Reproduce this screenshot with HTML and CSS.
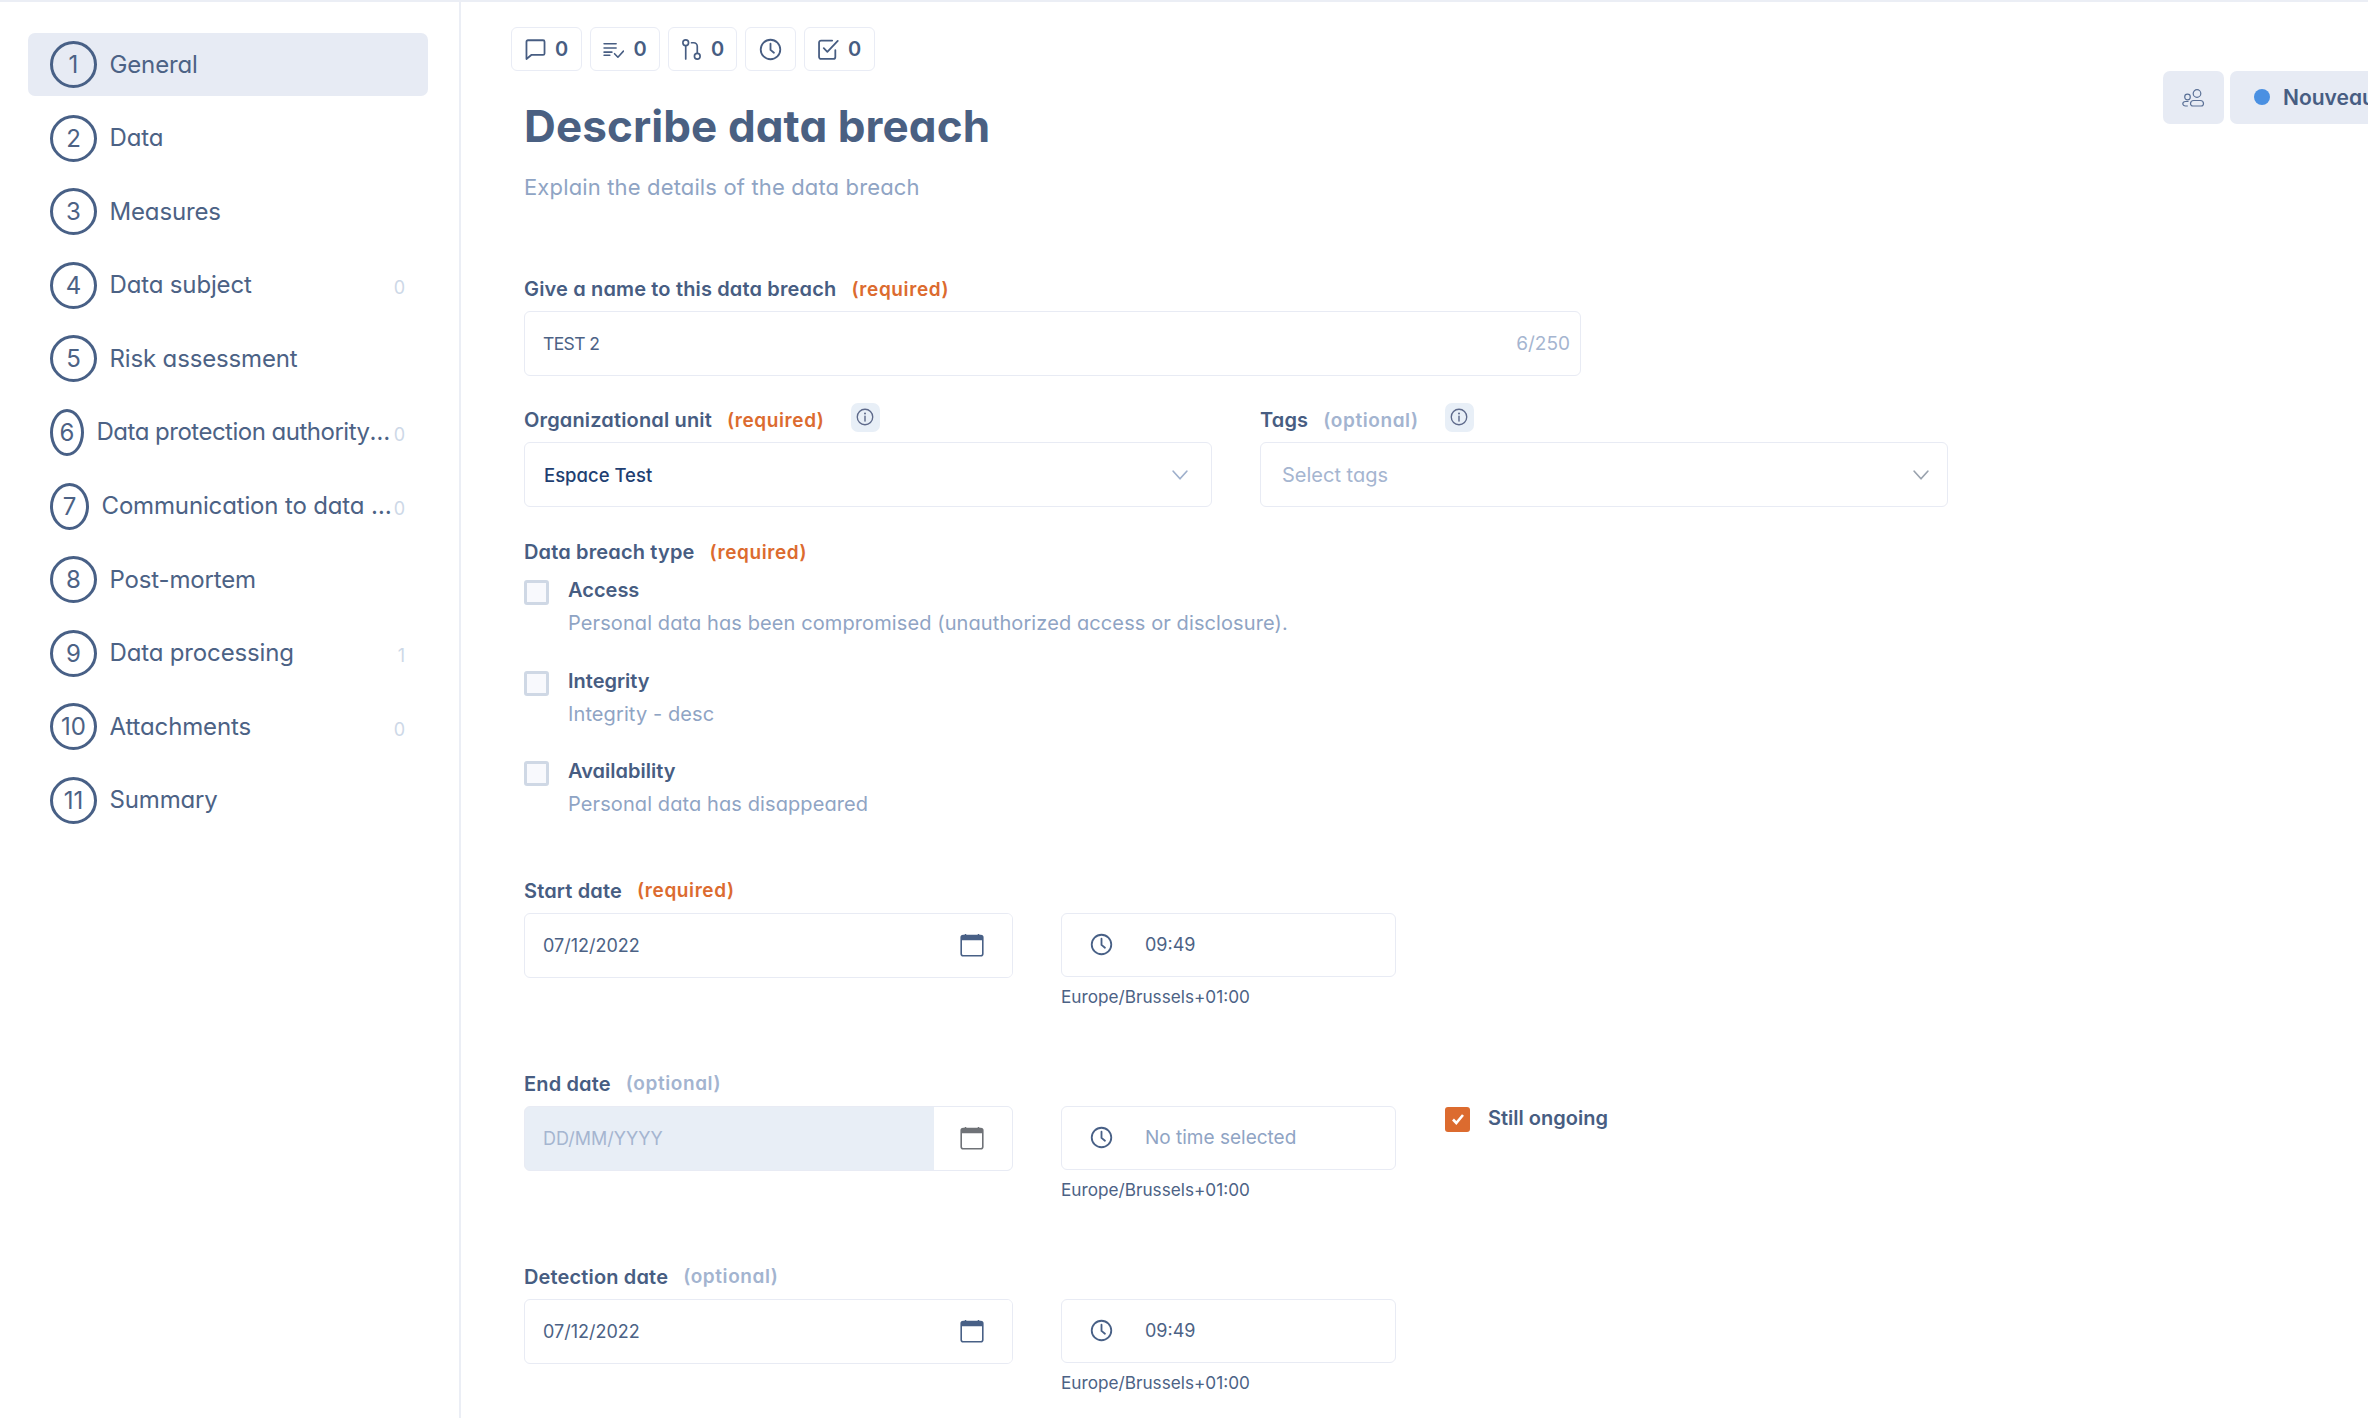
FILE: index.html
```html
<!DOCTYPE html>
<html>
  <head>
    <title>Describe data breach</title>
    <link rel="stylesheet" href="styles.css">
  </head>
  <body>
    <svg class="sprites" width="0" height="0">
      <symbol id="i-clock" viewBox="0 0 24 24"><circle cx="12" cy="12" r="10.2" fill="none" stroke="currentColor" stroke-width="1.9"/><path d="M12 6v6.4l3.6 3" fill="none" stroke="currentColor" stroke-width="1.9" stroke-linecap="round" stroke-linejoin="round"/></symbol>
      <symbol id="i-cal" viewBox="0 0 24 24"><rect x="1.2" y="2.6" width="21.6" height="20.2" rx="2" fill="none" stroke="currentColor" stroke-width="1.6"/><path d="M1.2 4.6a2 2 0 0 1 2-2h17.6a2 2 0 0 1 2 2v2.6H1.2z" fill="currentColor"/><path d="M5.5 1v2M18.5 1v2" stroke="currentColor" stroke-width="1.5"/></symbol>
      <symbol id="i-info" viewBox="0 0 20 20"><circle cx="10" cy="10" r="8.6" fill="none" stroke="currentColor" stroke-width="1.5"/><path d="M10 9v5.4" stroke="currentColor" stroke-width="1.6" stroke-linecap="round"/><circle cx="10" cy="6" r="1.1" fill="currentColor"/></symbol>
      <symbol id="i-chev" viewBox="0 0 16 10"><path d="M1.2 1.2 8 8.800l6.800-7.600" fill="none" stroke="currentColor" stroke-width="1.700" stroke-linecap="round" stroke-linejoin="round"/></symbol>
    </svg>

    <nav class="sidebar">
      <a class="step active"><span class="num">1</span><span class="step-name">General</span></a>
      <a class="step"><span class="num">2</span><span class="step-name">Data</span></a>
      <a class="step"><span class="num">3</span><span class="step-name">Measures</span></a>
      <a class="step"><span class="num">4</span><span class="step-name">Data subject</span><span class="count">0</span></a>
      <a class="step"><span class="num">5</span><span class="step-name">Risk assessment</span></a>
      <a class="step"><span class="num num-six">6</span><span class="step-name step-long">Data protection authority notification</span><span class="count">0</span></a>
      <a class="step"><span class="num num-seven">7</span><span class="step-name">Communication to data subjects</span><span class="count">0</span></a>
      <a class="step"><span class="num">8</span><span class="step-name">Post-mortem</span></a>
      <a class="step"><span class="num">9</span><span class="step-name">Data processing</span><span class="count">1</span></a>
      <a class="step"><span class="num">10</span><span class="step-name">Attachments</span><span class="count">0</span></a>
      <a class="step"><span class="num">11</span><span class="step-name">Summary</span></a>
    </nav>

    <main class="main">
      <div class="pills">
        <div class="pill pill-comment">
          <svg class="pill-icon" viewBox="0 0 20 20"><path d="M2.8 1.2h14.4a1.4 1.4 0 0 1 1.4 1.4v11.2a1.4 1.4 0 0 1-1.4 1.4H6L1.4 19V2.6a1.4 1.4 0 0 1 1.4-1.4z" fill="none" stroke="currentColor" stroke-width="1.7" stroke-linejoin="round"/></svg>
          <span>0</span>
        </div>
        <div class="pill pill-list">
          <svg class="pill-icon" viewBox="0 0 20 20"><path d="M1 4.5h11.5M1 8.5h11.5M1 12.5h7.5M1 15.5h5.5M11 14l3.2 3.4L19.5 11.5" fill="none" stroke="currentColor" stroke-width="1.5" stroke-linecap="round" stroke-linejoin="round"/></svg>
          <span>0</span>
        </div>
        <div class="pill pill-merge">
          <svg class="pill-icon" viewBox="0 0 20 20"><circle cx="4.5" cy="3.6" r="2.7" fill="none" stroke="currentColor" stroke-width="1.6"/><path d="M4.5 6.4V19" stroke="currentColor" stroke-width="1.6" stroke-linecap="round"/><circle cx="15.5" cy="16.4" r="2.7" fill="none" stroke="currentColor" stroke-width="1.6"/><path d="M15.5 13.6V7a3.4 3.4 0 0 0-3.4-3.4H10" fill="none" stroke="currentColor" stroke-width="1.6" stroke-linecap="round"/></svg>
          <span>0</span>
        </div>
        <div class="pill pill-clock">
          <svg class="pill-icon pill-icon-big"><use href="#i-clock"/></svg>
        </div>
        <div class="pill pill-task">
          <svg class="pill-icon" viewBox="0 0 20 20"><path d="M16.5 10.5v6.6a1.900 1.900 0 0 1-1.900 1.900H2.900A1.900 1.900 0 0 1 1 17.100V3.400A1.900 1.900 0 0 1 2.900 1.500h10.600" fill="none" stroke="currentColor" stroke-width="1.7" stroke-linecap="round"/><path d="m5.500 8.800 3.400 3.400L18.800 1.800" fill="none" stroke="currentColor" stroke-width="1.700" stroke-linecap="round" stroke-linejoin="round"/></svg>
          <span>0</span>
        </div>
      </div>

      <header class="page-head">
        <div class="head-text">
          <h1>Describe data breach</h1>
          <p class="subtitle">Explain the details of the data breach</p>
        </div>
        <div class="head-actions">
          <div class="team-btn">
            <svg width="24" height="18" viewBox="0 0 24 18"><circle cx="15" cy="4.500" r="3.800" fill="none" stroke="currentColor" stroke-width="1.200"/><path d="M8.500 14.500a3.200 3.200 0 0 1 3.200-3h6.600a3.200 3.200 0 0 1 3.200 3c0 1.500-1 2.500-2.400 2.500H10.900c-1.400 0-2.400-1-2.400-2.500z" fill="none" stroke="currentColor" stroke-width="1.200"/><circle cx="5.500" cy="8" r="2.800" fill="none" stroke="currentColor" stroke-width="1.200"/><path d="M5.800 17H3.500C2 17 .8 16 .8 14.800c0-1.400 1.200-2.300 2.700-2.300h3" fill="none" stroke="currentColor" stroke-width="1.200"/></svg>
          </div>
          <div class="status-btn"><span class="status-dot"></span>Nouveau</div>
        </div>
      </header>

      <form class="form">
        <div class="label-row first"><span class="label">Give a name to this data breach</span><span class="req">(required)</span></div>
        <div class="box name-box"><span class="value name-value">TEST 2</span><span class="counter">6/250</span></div>

        <div class="two-cols">
          <div>
            <div class="label-row"><span class="label">Organizational unit</span><span class="req">(required)</span><span class="info"><svg width="18" height="18"><use href="#i-info"/></svg></span></div>
            <div class="box select-box"><span class="select-value">Espace Test</span><svg class="chev" width="16" height="10"><use href="#i-chev"/></svg></div>
          </div>
          <div>
            <div class="label-row"><span class="label">Tags</span><span class="opt">(optional)</span><span class="info"><svg width="18" height="18"><use href="#i-info"/></svg></span></div>
            <div class="box select-box tags-box"><span class="placeholder">Select tags</span><svg class="chev chev-grey" width="16" height="10"><use href="#i-chev"/></svg></div>
          </div>
        </div>

        <div class="label-row type-label"><span class="label">Data breach type</span><span class="req">(required)</span></div>
        <div class="option">
          <span class="checkbox"></span>
          <div><div class="option-title">Access</div><div class="option-desc">Personal data has been compromised (unauthorized access or disclosure).</div></div>
        </div>
        <div class="option">
          <span class="checkbox"></span>
          <div><div class="option-title">Integrity</div><div class="option-desc">Integrity - desc</div></div>
        </div>
        <div class="option">
          <span class="checkbox"></span>
          <div><div class="option-title">Availability</div><div class="option-desc">Personal data has disappeared</div></div>
        </div>

        <section class="date-block start-block">
          <div class="label-row"><span class="label">Start date</span><span class="req">(required)</span></div>
          <div class="date-row">
            <div class="box date-box"><span class="value">07/12/2022</span><span class="cal-cell"><svg class="cal" width="24" height="24"><use href="#i-cal"/></svg></span></div>
            <div>
              <div class="box time-box"><svg class="clock" width="23" height="23"><use href="#i-clock"/></svg><span class="time">09:49</span></div>
              <div class="zone">Europe/Brussels+01:00</div>
            </div>
          </div>
        </section>

        <section class="date-block">
          <div class="label-row"><span class="label">End date</span><span class="opt">(optional)</span></div>
          <div class="date-row">
            <div class="box date-box disabled"><span class="value">DD/MM/YYYY</span><span class="cal-cell"><svg class="cal" width="24" height="24"><use href="#i-cal"/></svg></span></div>
            <div>
              <div class="box time-box"><svg class="clock" width="23" height="23"><use href="#i-clock"/></svg><span class="time no-time">No time selected</span></div>
              <div class="zone">Europe/Brussels+01:00</div>
            </div>
            <div class="ongoing">
              <span class="checkbox checked"><svg width="14" height="12" viewBox="0 0 14 12"><path d="M2 6.500 5.300 10 12 2" fill="none" stroke="#fff" stroke-width="2.600"/></svg></span>
              <span class="option-title">Still ongoing</span>
            </div>
          </div>
        </section>

        <section class="date-block">
          <div class="label-row"><span class="label">Detection date</span><span class="opt">(optional)</span></div>
          <div class="date-row">
            <div class="box date-box"><span class="value">07/12/2022</span><span class="cal-cell"><svg class="cal" width="24" height="24"><use href="#i-cal"/></svg></span></div>
            <div>
              <div class="box time-box"><svg class="clock" width="23" height="23"><use href="#i-clock"/></svg><span class="time">09:49</span></div>
              <div class="zone">Europe/Brussels+01:00</div>
            </div>
          </div>
        </section>
      </form>
    </main>
  </body>
</html>
```

FILE: styles.css
```css
/* base */
html, body {
    height: 100%;
}

body {
    margin: 0;
    height: 1418px;
    overflow: hidden;
    display: flex;
    box-sizing: border-box;
    border-top: 2px solid #ebeef5;
    background: #fff;
    color: #475d82;
    font-family: "Inter", "Liberation Sans", sans-serif;
    font-feature-settings: "cv11";
}

.sprites {
    position: absolute;
}

/* sidebar */
.sidebar {
    flex: 0 0 auto;
    width: 459px;
    box-sizing: content-box;
    border-right: 2px solid #ebeef5;
    display: flex;
    flex-direction: column;
    gap: 10.6px;
    padding: 31px 0 0 0;
}

.step {
    width: 400px;
    height: 63px;
    margin-left: 28px;
    box-sizing: border-box;
    padding: 0 23px 0 22px;
    display: flex;
    align-items: center;
    border-radius: 7px;
    font-size: 24px;
    color: #4c6285;
}

.step.active {
    background: #e7ebf4;
}

.num {
    flex: 0 0 auto;
    width: 47px;
    height: 47px;
    box-sizing: border-box;
    border: 3px solid #486086;
    border-radius: 50%;
    display: flex;
    align-items: center;
    justify-content: center;
    font-size: 24px;
    margin-right: 12.5px;
}

.num-six {
    width: 34px;
}

.num-seven {
    width: 39px;
}

.step-name {
    flex: 1;
    min-width: 0;
    white-space: nowrap;
    overflow: hidden;
    text-overflow: ellipsis;
    letter-spacing: -0.15px;
    margin-top: -1px;
}

.step-long {
    letter-spacing: -0.5px;
}

.count {
    flex: 0 0 auto;
    font-size: 18px;
    color: #cdd8e7;
    margin-top: 5px;
}

/* main column */
.main {
    flex: 1;
    min-width: 0;
    padding: 25px 0 0 63px;
}

.pills {
    display: flex;
    gap: 8px;
    margin-left: -13px;
}

.pill {
    height: 44px;
    box-sizing: border-box;
    border: 1.5px solid #e9ecf5;
    border-radius: 6px;
    display: flex;
    align-items: center;
    justify-content: center;
    gap: 9px;
    font-size: 20px;
    font-weight: 600;
    color: #475d82;
}

.pill-comment { width: 71px; }
.pill-list { width: 70px; }
.pill-merge { width: 69px; }
.pill-clock { width: 51px; }
.pill-task { width: 71px; }

.pill-icon {
    width: 21px;
    height: 21px;
}

.pill-icon-big {
    width: 23px;
    height: 23px;
}

.page-head {
    display: flex;
    justify-content: space-between;
    align-items: flex-start;
}

.head-text {
    padding-top: 25px;
}

h1 {
    margin: 0;
    font-size: 44px;
    line-height: 60px;
    font-weight: 700;
    letter-spacing: 0.1px;
    color: #4a6082;
}

.subtitle {
    margin: 15px 0 0;
    font-size: 22px;
    line-height: 32px;
    letter-spacing: 0.15px;
    color: #8fa4c4;
}

.head-actions {
    display: flex;
    gap: 6px;
    margin-right: -60px;
}

.team-btn {
    width: 61px;
    height: 53px;
    border-radius: 7px;
    background: #e7ebf4;
    display: flex;
    align-items: center;
    justify-content: center;
    color: #5a7096;
}

.status-btn {
    width: 198px;
    height: 53px;
    box-sizing: border-box;
    padding-left: 24px;
    padding-bottom: 1px;
    border-radius: 7px;
    background: #e7ebf4;
    display: flex;
    align-items: center;
    gap: 13px;
    font-size: 21px;
    font-weight: 600;
    color: #475d82;
}

.status-dot {
    width: 16px;
    height: 16px;
    border-radius: 50%;
    background: #4a90e2;
}

/* form */
.label-row {
    display: flex;
    align-items: center;
    height: 26px;
    box-sizing: border-box;
    padding-top: 2px;
    margin-bottom: 10px;
}

.label-row.first {
    margin-top: 72px;
}

.label {
    font-size: 20px;
    line-height: 24px;
    font-weight: 600;
    letter-spacing: 0.15px;
    color: #475d82;
}

.req, .opt {
    margin-left: 15px;
    font-size: 19px;
    font-weight: 600;
    letter-spacing: 0.6px;
}

.req {
    color: #dc6b2f;
}

.opt {
    color: #a3b4d0;
}

.info {
    width: 29px;
    height: 29px;
    margin-left: 26px;
    margin-top: -6px;
    border-radius: 7px;
    background: #e8eff7;
    color: #5e6a8b;
    display: flex;
    align-items: center;
    justify-content: center;
}

.box {
    box-sizing: border-box;
    height: 65px;
    border: 1.5px solid #e8ebf4;
    border-radius: 6px;
    display: flex;
    align-items: center;
    background: #fff;
}

.name-box {
    width: 1057px;
    padding: 0 10px 0 18px;
    justify-content: space-between;
}

.value {
    font-size: 18px;
    color: #4c6285;
}

.name-value {
    font-size: 17.5px;
    letter-spacing: -0.6px;
}

.counter {
    font-size: 19px;
    color: #a5b5d0;
}

.two-cols {
    display: grid;
    grid-template-columns: 688px 688px;
    gap: 48px;
    margin-top: 30px;
}

.select-box {
    padding: 0 23px 0 19px;
    justify-content: space-between;
}

.tags-box {
    padding: 0 18px 0 21px;
}

.select-value {
    font-size: 18.5px;
    font-weight: 500;
    color: #1f3f72;
}

.placeholder {
    font-size: 20px;
    color: #a5b5d0;
}

.chev {
    color: #9fb0cc;
}

.chev-grey {
    color: #9aa3ae;
}

.type-label {
    margin-top: 31px;
    margin-bottom: 13px;
}

.option {
    display: flex;
    align-items: flex-start;
    gap: 19px;
    height: 90.5px;
}

.checkbox {
    flex: 0 0 auto;
    width: 25px;
    height: 25px;
    margin-top: 3px;
    box-sizing: border-box;
    border: 3px solid #cfd8e5;
    border-radius: 3px;
    background: #f8f9fd;
}

.checkbox.checked {
    margin-top: 0;
    border: none;
    background: #dc6b2f;
    display: flex;
    align-items: center;
    justify-content: center;
}

.option-title {
    font-size: 20px;
    line-height: 26px;
    font-weight: 600;
    color: #475d82;
}

.option-desc {
    margin-top: 4px;
    font-size: 20px;
    line-height: 32px;
    letter-spacing: 0.1px;
    color: #8fa4c4;
}

.date-block {
    height: 193px;
}

.start-block {
    margin-top: 28px;
}

.date-row {
    display: flex;
    gap: 48px;
    align-items: flex-start;
}

.date-box {
    width: 489px;
    padding-left: 18px;
    justify-content: space-between;
    overflow: hidden;
}

.cal-cell {
    width: 78px;
    height: 100%;
    background: #fff;
    display: flex;
    align-items: center;
    justify-content: center;
    padding-right: 2px;
    box-sizing: border-box;
    color: #486086;
}

.date-box.disabled {
    background: #e8eef6;
}

.date-box.disabled .value {
    color: #a5b5d0;
}

.date-box.disabled .cal-cell {
    color: #6f7277;
}

.time-box {
    width: 335px;
    padding-left: 28px;
    gap: 32px;
    height: 64px;
}

.clock {
    color: #486086;
}

.time {
    font-size: 18px;
    color: #4c6285;
}

.no-time {
    font-size: 19px;
    color: #8fa4c4;
}

.zone {
    margin-top: 8px;
    font-size: 17.2px;
    line-height: 24px;
    color: #4c6285;
}

.ongoing {
    display: flex;
    align-items: flex-start;
    gap: 18px;
    margin-top: 1px;
    margin-left: 1px;
}

.ongoing .option-title {
    margin-top: -2px;
}
```
